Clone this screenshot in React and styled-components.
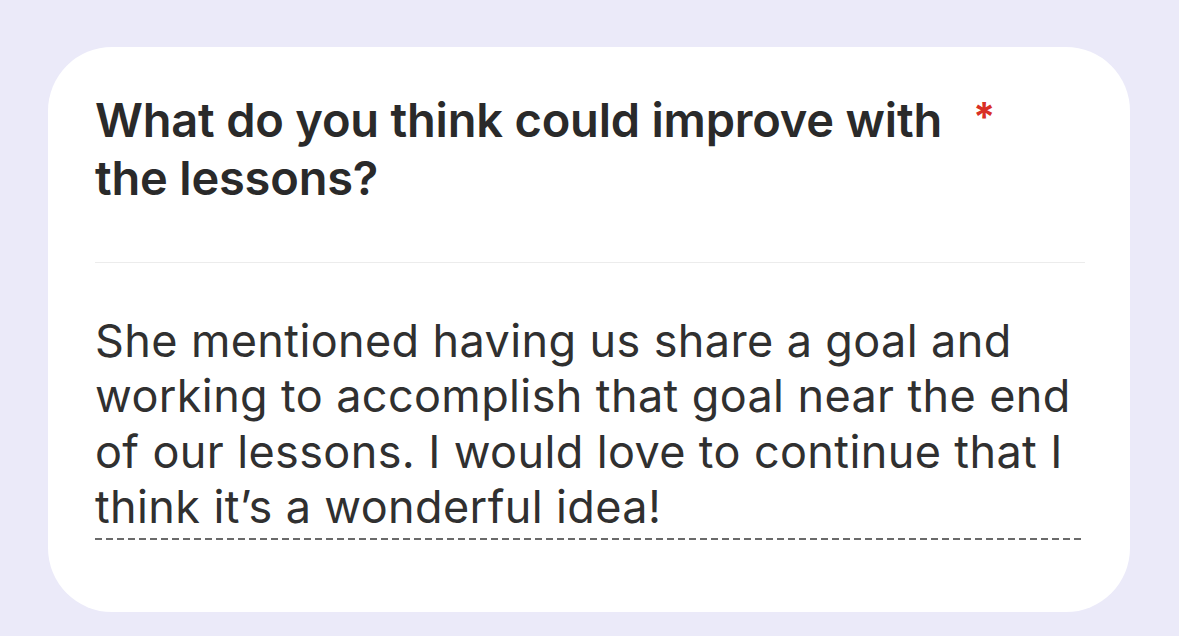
import styled, { createGlobalStyle } from 'styled-components';

const GlobalStyle = createGlobalStyle`
  html, body {
    margin: 0;
    padding: 0;
    background: #ebeaf9;
  }

  body {
    font-family: Inter, "Noto Sans", sans-serif;
    -webkit-font-smoothing: antialiased;
  }
`;

const Page = styled.div`
  box-sizing: border-box;
  width: 1179px;
  height: 636px;
  padding: 47px 49px 24px 48px;
  background: #ebeaf9;
`;

const Card = styled.div`
  box-sizing: border-box;
  height: 100%;
  padding: 44px 45px 0 47px;
  background: #fff;
  border-radius: 64px;
`;

const QuestionRow = styled.div`
  display: flex;
  align-items: flex-start;
  gap: 10px;
  padding-bottom: 55px;
  border-bottom: 1px solid #ececec;
`;

const Question = styled.h2`
  margin: 0;
  width: 868px;
  font-size: 47px;
  font-weight: 600;
  line-height: 58px;
  letter-spacing: -0.2px;
  color: #2a2a2a;
`;

const Required = styled.span`
  margin-top: -3px;
  font-size: 40px;
  font-weight: 700;
  line-height: 58px;
  color: #d93025;
`;

const Answer = styled.div`
  padding-top: 50px;
`;

const AnswerText = styled.p`
  margin: 0;
  padding-bottom: 3px;
  font-size: 45px;
  font-weight: 400;
  line-height: 55.4px;
  letter-spacing: 0.38px;
  color: #303030;
`;

const DashedRule = styled.div`
  height: 2px;
  background: repeating-linear-gradient(
    to right,
    #6a6a6a 0 7px,
    transparent 7px 11px
  );
`;

function App() {
  return (
    <>
      <GlobalStyle />
      <Page>
        <Card>
          <QuestionRow>
            <Question>What do you think could improve with the lessons?</Question>
            <Required>*</Required>
          </QuestionRow>
          <Answer>
            <AnswerText>
              She mentioned having us share a goal and working to accomplish that goal near the end
              of our lessons. I would love to continue that I think it’s a wonderful idea!
            </AnswerText>
            <DashedRule />
          </Answer>
        </Card>
      </Page>
    </>
  );
}

export default App;
